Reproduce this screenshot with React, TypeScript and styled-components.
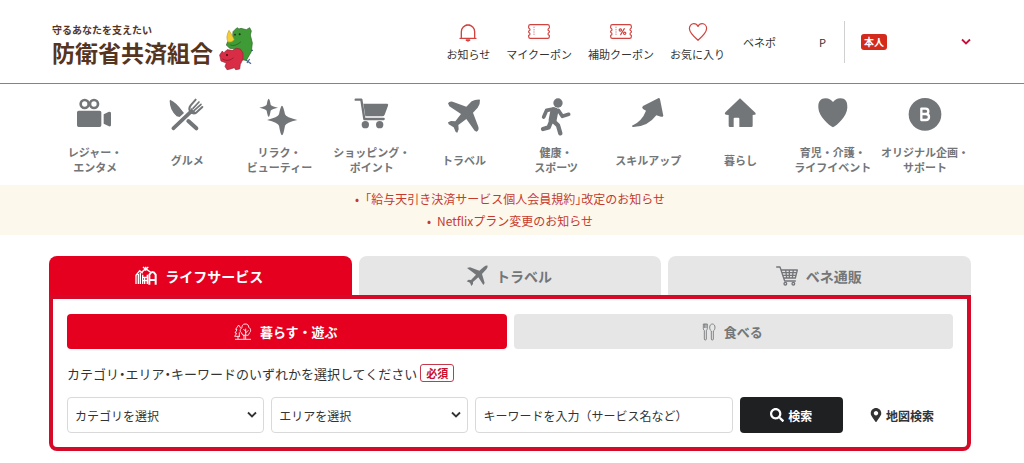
import React from 'react';
import styled, { createGlobalStyle } from 'styled-components';
import { FaMapMarkerAlt, FaSearch } from 'react-icons/fa';

const GlobalStyle = createGlobalStyle`
  *, *::before, *::after { box-sizing: border-box; }
  body {
    margin: 0;
    background: #fff;
    color: #333;
    font-family: "Noto Sans CJK JP", sans-serif;
    font-size: 13px;
  }
  button, input, select { font: inherit; color: inherit; margin: 0; }
  a { color: inherit; text-decoration: none; }
  ul { list-style: none; margin: 0; padding: 0; }
  svg { display: block; flex: none; }
`;

const RED = '#e60020';
const BORDER_RED = '#d40a28';
const GREY = '#737679';

const Header = styled.header`
  display: flex;
  align-items: center;
  height: 84px;
  padding: 0 53px 0 52px;
  border-bottom: 1px solid #d9605c;
`;

const Brand = styled.a`
  display: flex;
  align-items: center;
  gap: 6px;
  padding-top: 14px;
  color: #56351f;
  font-weight: 700;
`;

const BrandText = styled.span`
  display: flex;
  flex-direction: column;
  padding-bottom: 6px;
`;

const BrandLead = styled.span`
  font-size: 10px;
  line-height: 12px;
`;

const BrandName = styled.span`
  font-size: 23px;
  line-height: 32px;
`;

const Shortcuts = styled.nav`
  display: flex;
  gap: 16px;
  margin-left: auto;
`;

const Shortcut = styled.a`
  display: flex;
  flex-direction: column;
  align-items: center;
  gap: 4px;
  font-size: 11px;
  line-height: 16px;
  white-space: nowrap;
`;

const Points = styled.div`
  display: flex;
  justify-content: space-between;
  width: 83px;
  margin: 0 18px;
  font-size: 11px;
  line-height: 16px;
`;

const Account = styled.button`
  display: flex;
  align-items: center;
  justify-content: space-between;
  width: 127px;
  height: 42px;
  padding: 0 0 0 16px;
  border: 0;
  border-left: 1px solid #d0d0d0;
  background: none;
`;

const Badge = styled.span`
  padding: 0 3px;
  border-radius: 3px;
  background: #d42a1c;
  color: #fff;
  font-size: 10px;
  font-weight: 700;
  line-height: 16px;
`;

const Categories = styled.nav`
  display: grid;
  grid-template-columns: repeat(10, 1fr);
  padding: 13px 53px 10px 49px;
`;

const Category = styled.a`
  display: flex;
  flex-direction: column;
  align-items: center;
  gap: 8px;
  color: ${GREY};
  font-size: 11px;
  font-weight: 700;
  line-height: 15px;
  text-align: center;
  white-space: nowrap;
`;

const CategoryLabel = styled.span`
  display: flex;
  flex-direction: column;
  justify-content: center;
  height: 30px;
`;

const Notices = styled.ul`
  padding: 3px 53px 3px 49px;
  background: #fdf8ec;
  color: #c63a2d;
  font-feature-settings: "halt";
  font-size: 12px;
  line-height: 22px;
  text-align: center;
`;

const Notice = styled.li`
  &::before { content: "•"; margin-right: 6px; }
`;

const Main = styled.main`
  padding: 21px 53px 13px 49px;
`;

const Tabs = styled.div`
  display: grid;
  grid-template-columns: repeat(3, 1fr);
  gap: 7px;
`;

const Tab = styled.button<{ $active?: boolean }>`
  display: flex;
  align-items: center;
  justify-content: center;
  gap: 8px;
  height: 39px;
  padding: 0 2px 0 0;
  border: 0;
  border-radius: 8px 8px 0 0;
  background: ${(p) => (p.$active ? RED : '#e6e6e6')};
  color: ${(p) => (p.$active ? '#fff' : GREY)};
  font-size: 14px;
  font-weight: 700;
`;

const Panel = styled.section`
  padding: 15px 14px 14px;
  border: 4px solid ${BORDER_RED};
  border-radius: 0 0 8px 8px;
`;

const Modes = styled.div`
  display: grid;
  grid-template-columns: 1fr 1fr;
  gap: 7px;
`;

const Mode = styled(Tab)`
  height: 35px;
  border-radius: 4px;
  font-size: 13px;
`;

const Hint = styled.p`
  display: flex;
  align-items: center;
  gap: 3px;
  height: 48px;
  margin: 0;
  font-feature-settings: "halt";
`;

const Required = styled.span`
  padding: 0 5px;
  border: 1px solid #c8384c;
  border-radius: 3px;
  color: #c8102e;
  font-size: 11px;
  font-weight: 700;
  line-height: 16px;
`;

const SearchForm = styled.form`
  display: grid;
  grid-template-columns: 197fr 197fr 257fr 103fr 103fr;
  gap: 7px;
  font-size: 12px;
`;

const SelectBox = styled.div`
  position: relative;
  svg {
    position: absolute;
    top: 14px;
    right: 7px;
    pointer-events: none;
  }
`;

const Select = styled.select`
  appearance: none;
  width: 100%;
  height: 36px;
  padding: 0 24px 0 7px;
  border: 1px solid #d9d9d9;
  border-radius: 4px;
  background: #fff;
`;

const Keyword = styled.input`
  width: 100%;
  height: 36px;
  padding: 0 7px;
  border: 1px solid #d9d9d9;
  border-radius: 4px;
  &::placeholder { color: #333; opacity: 1; }
`;

const SearchButton = styled.button`
  display: flex;
  align-items: center;
  justify-content: center;
  gap: 4px;
  padding: 0;
  border: 0;
  border-radius: 4px;
  background: #1f2022;
  color: #fff;
  font-weight: 700;
`;

const MapLink = styled.a`
  display: flex;
  align-items: center;
  justify-content: center;
  gap: 3px;
  font-weight: 700;
`;

const Mascot = () => (
  <svg width="36" height="48" viewBox="538 46 108 144" aria-hidden="true">
    <path d="M612 122 L640 122 M618 150 L634 162 M622 160 L630 148" stroke="#4c6c94" strokeWidth="4" />
    <path d="M580 66 L588 58 L592 54 L598 58 L604 56 L612 58 L620 60 L630 54 L635 64 L632 76 L638 100 L635 126 L620 152 L602 150 L596 118 L570 116 L560 106 L564 96 L578 92 Z" fill="#3f9b35" stroke="#2c6427" strokeWidth="2" strokeLinejoin="round" />
    <path d="M568 62 Q578 76 584 90 Q576 100 565 97 Q557 82 568 62Z" fill="#f3cf35" stroke="#a98a20" strokeWidth="1.5" />
    <circle cx="600" cy="74" r="3" fill="#1d2b1b" />
    <circle cx="586" cy="75" r="2.5" fill="#1d2b1b" />
    <path d="M572 106 Q586 112 604 96" fill="none" stroke="#245a20" strokeWidth="2" />
    <path d="M540 136 L548 124 L552 130 L562 120 L578 122 L590 116 L602 118 L610 130 L610 148 L602 164 L600 178 L588 180 L584 174 L572 178 L562 180 L556 170 L560 160 L544 154 Z" fill="#d92c45" stroke="#8f2435" strokeWidth="2" strokeLinejoin="round" />
    <circle cx="562" cy="136" r="3" fill="#3a1218" />
    <path d="M548 148 Q566 158 582 144" fill="none" stroke="#7d1b2b" strokeWidth="2" />
  </svg>
);

const Line = styled.svg`
  fill: none;
  stroke: #d0433f;
  stroke-linecap: round;
  stroke-linejoin: round;
`;

const Bell = () => (
  <Line width="22" height="20" viewBox="0 0 66 60" strokeWidth="4">
    <path d="M13 46V29a20 20 0 0 1 40 0v17M9 49h48M28 9h10" />
    <path d="M28 54h10v1q-5 4-10 0z" fill="#d0433f" />
  </Line>
);

const Ticket = ({ percent }: { percent?: boolean }) => (
  <Line width="22" height="20" viewBox="0 0 66 60" strokeWidth="3.500">
    <path d="M7 8h52q5 0 5 5v5q-4 2-4 5t4 4v4q-4 2-4 5t4 4v4q0 5-5 5H7q-5 0-5-5v-4q4-1 4-4t-4-5v-4q4-1 4-4t-4-5v-5q0-5 5-5z" />
    <path d="M18 15v28" strokeDasharray="2 5" strokeWidth="2" />
    {percent && (
      <g>
        <circle cx="31" cy="24" r="3.500" />
        <circle cx="44" cy="34" r="3.500" />
        <path d="M43 20L32 38" />
      </g>
    )}
  </Line>
);

const HeartLine = () => (
  <Line width="22" height="20" viewBox="0 0 22 20" strokeWidth="1.2">
    <path d="M11 18.300C6 14 2.400 10.500 2.400 6.600 2.400 3.800 4.300 1.700 6.800 1.700c1.900 0 3.400 1 4.200 2.700.8-1.700 2.300-2.700 4.200-2.700 2.500 0 4.400 2.100 4.400 4.900 0 3.900-3.600 7.400-8.600 11.700z" />
  </Line>
);

const Chevron = ({ color }: { color: string }) => (
  <svg width="10" height="8" viewBox="0 0 10 8" fill="none" stroke={color} strokeWidth="1.8">
    <path d="M1 1.500l4 4 4-4" />
  </svg>
);

const categories = [
  {
    label: ['レジャー・', 'エンタメ'],
    box: '75 36 120 120',
    art: (
      <>
        <g fill="none" stroke="currentColor" strokeWidth="8">
          <circle cx="104" cy="57" r="12" />
          <circle cx="132" cy="57" r="12" />
        </g>
        <path d="M86 77h63q5 0 5 5v39q0 5-5 5H86q-5 0-5-5V82q0-5 5-5zM161 88l16-8q6 0 6 4v37q0 4-6 3l-16-8z" />
      </>
    ),
  },
  {
    label: ['グルメ'],
    box: '352 36 120 120',
    art: (
      <>
        <path d="M361 44 Q380 52 398 78 L403 84 L390 96 L381 94 Q360 75 360 48Z" />
        <path d="M371 130 L424 80" stroke="currentColor" strokeWidth="11" strokeLinecap="round" />
        <path d="M416 108 L440 130" stroke="currentColor" strokeWidth="12" strokeLinecap="round" />
        <path d="M438 44 L423 61 Q416 70 421 78 Q429 90 441 82 L458 66" fill="none" stroke="currentColor" strokeWidth="6" strokeLinecap="round" />
        <path d="M448 51 L430 70 M454 58 L434 76" stroke="currentColor" strokeWidth="5" strokeLinecap="round" />
        <path d="M424 68 L440 84 L424 86Z" />
      </>
    ),
  },
  {
    label: ['リラク・', 'ビューティー'],
    box: '628 36 120 120',
    art: (
      <>
        <path d="M657 41 Q660 41 663 59 Q665 63 685 68 Q665 73 663 77 Q660 95 657 95 Q654 95 651 77 Q649 73 629 68 Q649 63 651 59 Q654 41 657 41Z" />
        <path d="M697 62 Q701 62 706 88 Q709 97 743 105 Q709 113 706 122 Q701 151 697 151 Q693 151 688 122 Q685 113 652 105 Q685 97 688 88 Q693 62 697 62Z" />
      </>
    ),
  },
  {
    label: ['ショッピング・', 'ポイント'],
    box: '95 36 120 120',
    art: (
      <>
        <path d="M106 44 H123 L132 102 H190" fill="none" stroke="currentColor" strokeWidth="7" strokeLinecap="round" strokeLinejoin="round" />
        <path d="M129 56 H201 Q205 57 203 62 L193 89 Q191 94 186 94 H135Z" />
        <circle cx="135" cy="119" r="11" />
        <circle cx="178" cy="119" r="11" />
      </>
    ),
  },
  {
    label: ['トラベル'],
    box: '372 36 120 120',
    art: <path d="M384 55 Q388 48 398 50 L439 65 L455 49 Q466 43 480 44 Q481 57 473 68 L459 83 L475 125 Q478 135 470 140 L464 137 L439 102 L415 120 L416 133 L412 143 L407 141 L401 127 L386 118 L384 112 L393 108 L406 109 L423 87 L388 64 Z" />,
  },
  {
    label: ['健康・', 'スポーツ'],
    box: '648 36 120 120',
    art: (
      <>
        <circle cx="714" cy="54" r="14" />
        <g fill="none" stroke="currentColor" strokeLinecap="round" strokeLinejoin="round">
          <path d="M700 72 L680 76 L671 96" strokeWidth="11" />
          <path d="M715 76 L727 94 L746 88" strokeWidth="11" />
          <path d="M703 79 L698 104" strokeWidth="24" />
          <path d="M698 106 L714 121 L721 145" strokeWidth="13" />
          <path d="M692 112 L686 127 L669 132" strokeWidth="13" />
        </g>
      </>
    ),
  },
  {
    label: ['スキルアップ'],
    box: '115 36 120 120',
    art: <path d="M207 39 Q210 39 211 43 L221 92 Q219 97 214 95 L200 91 Q174 126 131 126 Q126 126 127 122 Q157 109 169 77 L160 72 Q155 68 160 63Z" />,
  },
  {
    label: ['暮らし'],
    box: '391 36 120 120',
    art: <path d="M451 40 L497 83 Q500 89 494 89 L489 90 V122 Q489 126 485 126 H449 V101 Q449 98 446 98 H435 Q432 98 432 101 V126 H421 Q417 126 417 122 V90 L409 89 Q403 88 407 82Z" />,
  },
  {
    label: ['育児・介護・', 'ライフイベント'],
    box: '98 36 120 120',
    art: <path d="M158 127 C146 120 115 95 114 68 C113 48 122 40 135 40 C147 40 154 46 158 51 C162 46 169 40 181 40 C194 40 202 48 201 68 C200 95 170 120 158 127Z" />,
  },
  {
    label: ['オリジナル企画・', 'サポート'],
    box: '375 36 120 120',
    art: (
      <>
        <circle cx="435" cy="88" r="49" />
        <path d="M424 71 H437 Q445 71 445 79 Q445 87 437 87 H424Z M437 87 Q447 87 447 96 Q447 105 438 105 H424 V87" fill="none" stroke="#fff" strokeWidth="7" strokeLinejoin="round" />
      </>
    ),
  },
];

const TownIcon = () => (
  <svg width="22" height="20" viewBox="0 0 66 60" fill="none" stroke="currentColor" strokeWidth="4">
    <path d="M3 54V28L14 14l9 8M10 24v30M16 20v34M23 26v28M23 34h14M29 34v20M23 44h14M37 54V26" />
    <path d="M43 56V26q10-16 19 0v30M43 42h19" strokeWidth="6" />
    <path d="M20 19l12-11 15 11M32 14V2M24 3l8 7 8-7" />
  </svg>
);

const TreesIcon = () => (
  <svg width="18" height="18" viewBox="0 0 54 54" fill="none" stroke="currentColor" strokeWidth="2.600" strokeLinejoin="round">
    <path d="M14 6L5 19l4 1-6 10 5 1-6 9h16M14 6l6 9M12 40v9M16 28v12M3 49h48" />
    <path d="M33 3c8-1 12 5 11 10 7 3 8 13 2 17 0 6-6 9-11 6-5 3-12 0-12-6-7-4-5-13 1-16-1-6 3-11 9-11zM35 48V17M35 30l8-8M35 25l-7-7M30 48V35" />
  </svg>
);

const CutleryIcon = () => (
  <svg width="14" height="18" viewBox="0 0 42 54" fill="none" stroke="currentColor" strokeWidth="2.600" strokeLinejoin="round">
    <path d="M4 3v14q0 4 3 5v26q0 3 3 3t3-3V22q3-1 3-5V3zM8 3v12M12 3v12" />
    <path d="M31 3c-10 0-10 17-3 21v24q0 3 3 3t3-3V24c7-4 7-21-3-21z" />
  </svg>
);

const PlaneIcon = () => (
  <svg width="22" height="22" viewBox="0 0 66 66" fill="currentColor">
    <path d="M3 9L12 7 40 17 54 5Q60 1 65 2 65 8 61 13L48 27 56 54 52 60 37 37 21 51 21 57 16 63 12 53 2 49 8 44 15 45 30 29Z" />
  </svg>
);

const CartIcon = () => (
  <svg width="22" height="20" viewBox="0 0 66 60" fill="none" stroke="currentColor" strokeWidth="4" strokeLinecap="round" strokeLinejoin="round">
    <path d="M2 3h10l14 42h32M15 12h49l-6 24H23M18 20h44M21 28h39M29 12l3 24M40 12v24M52 12l-3 24" />
    <circle cx="28" cy="53" r="4" />
    <circle cx="52" cy="53" r="4" />
  </svg>
);

export default function App() {
  return (
    <>
      <GlobalStyle />
      <Header>
        <Brand href="#">
          <BrandText>
            <BrandLead>守るあなたを支えたい</BrandLead>
            <BrandName>防衛省共済組合</BrandName>
          </BrandText>
          <Mascot />
        </Brand>
        <Shortcuts>
          <Shortcut href="#"><Bell />お知らせ</Shortcut>
          <Shortcut href="#"><Ticket />マイクーポン</Shortcut>
          <Shortcut href="#"><Ticket percent />補助クーポン</Shortcut>
          <Shortcut href="#"><HeartLine />お気に入り</Shortcut>
        </Shortcuts>
        <Points><span>ベネポ</span><span>P</span></Points>
        <Account type="button"><Badge>本人</Badge><Chevron color="#c8103c" /></Account>
      </Header>

      <Categories>
        {categories.map(({ label, box, art }) => (
          <Category href="#" key={label[0]}>
            <svg width="40" height="40" viewBox={box} fill="currentColor">{art}</svg>
            <CategoryLabel>
              {label.map((line) => <span key={line}>{line}</span>)}
            </CategoryLabel>
          </Category>
        ))}
      </Categories>

      <Notices>
        <Notice><a href="#">「給与天引き決済サービス個人会員規約」改定のお知らせ</a></Notice>
        <Notice><a href="#">Netflixプラン変更のお知らせ</a></Notice>
      </Notices>

      <Main>
        <Tabs>
          <Tab type="button" $active><TownIcon />ライフサービス</Tab>
          <Tab type="button"><PlaneIcon />トラベル</Tab>
          <Tab type="button"><CartIcon />ベネ通販</Tab>
        </Tabs>
        <Panel>
          <Modes>
            <Mode type="button" $active><TreesIcon />暮らす・遊ぶ</Mode>
            <Mode type="button"><CutleryIcon />食べる</Mode>
          </Modes>
          <Hint>
            カテゴリ・エリア・キーワードのいずれかを選択してください
            <Required>必須</Required>
          </Hint>
          <SearchForm>
            <SelectBox>
              <Select aria-label="カテゴリ"><option>カテゴリを選択</option></Select>
              <Chevron color="#333" />
            </SelectBox>
            <SelectBox>
              <Select aria-label="エリア"><option>エリアを選択</option></Select>
              <Chevron color="#333" />
            </SelectBox>
            <Keyword type="text" aria-label="キーワード" placeholder="キーワードを入力（サービス名など）" />
            <SearchButton type="button"><FaSearch size={14} />検索</SearchButton>
            <MapLink href="#"><FaMapMarkerAlt size={14} />地図検索</MapLink>
          </SearchForm>
        </Panel>
      </Main>
    </>
  );
}
